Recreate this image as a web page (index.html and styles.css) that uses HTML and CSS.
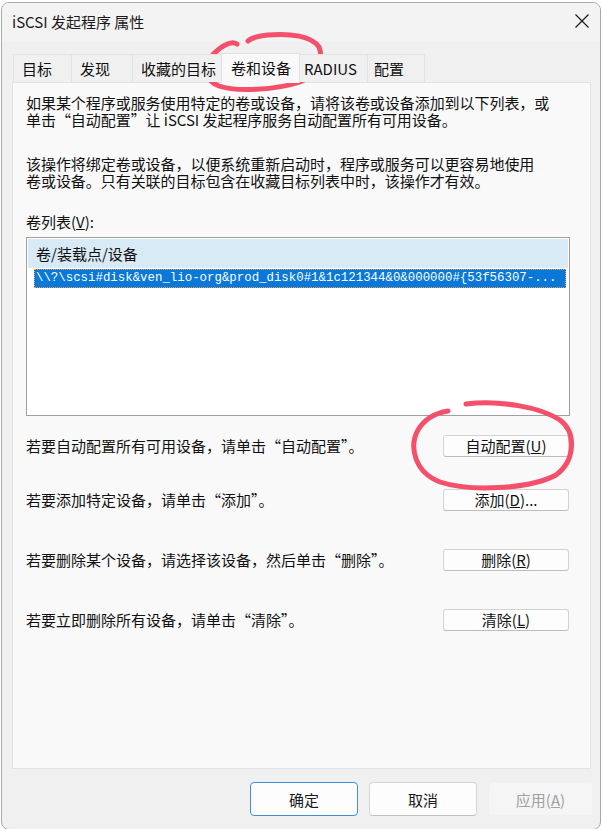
FILE: index.html
```html
<!DOCTYPE html>
<html lang="zh-CN">
<head>
<meta charset="utf-8">
<title>iSCSI 发起程序 属性</title>
<link rel="stylesheet" href="styles.css">
</head>
<body>
<div class="window">
  <div class="titlebar">
    <span class="title">iSCSI 发起程序 属性</span>
    <svg class="close" width="16" height="16" viewBox="0 0 16 16"><path d="M1.5 1.5 L14.5 14.5 M14.5 1.5 L1.5 14.5" stroke="#1a1a1a" stroke-width="1.2" fill="none"/></svg>
  </div>
  <div class="tabs">
    <div class="tab t1">目标</div>
    <div class="tab t2">发现</div>
    <div class="tab t3">收藏的目标</div>
    <div class="tab t4 active">卷和设备</div>
    <div class="tab t5">RADIUS</div>
    <div class="tab t6">配置</div>
  </div>
  <div class="panel">
    <p class="para p1">如果某个程序或服务使用特定的卷或设备，请将该卷或设备添加到以下列表，或<br>单击“自动配置”让 iSCSI 发起程序服务自动配置所有可用设备。</p>
    <p class="para p2">该操作将绑定卷或设备，以便系统重新启动时，程序或服务可以更容易地使用<br>卷或设备。只有关联的目标包含在收藏目标列表中时，该操作才有效。</p>
    <p class="label">卷列表(<u>V</u>):</p>
    <div class="listbox">
      <div class="lhead">卷/装载点/设备</div>
      <div class="litem">\\?\scsi#disk&amp;ven_lio-org&amp;prod_disk0#1&amp;1c121344&amp;0&amp;000000#{53f56307-...</div>
    </div>
    <div class="row r1"><span>若要自动配置所有可用设备，请单击“自动配置”。</span><button class="btn">自动配置(<u>U</u>)</button></div>
    <div class="row r2"><span>若要添加特定设备，请单击“添加”。</span><button class="btn">添加(<u>D</u>)...</button></div>
    <div class="row r3"><span>若要删除某个设备，请选择该设备，然后单击“删除”。</span><button class="btn">删除(<u>R</u>)</button></div>
    <div class="row r4"><span>若要立即删除所有设备，请单击“清除”。</span><button class="btn">清除(<u>L</u>)</button></div>
  </div>
  <div class="footer">
    <button class="fbtn default">确定</button>
    <button class="fbtn">取消</button>
    <button class="fbtn disabled">应用(<u>A</u>)</button>
  </div>
</div>
<svg class="marks" width="603" height="829" viewBox="0 0 603 829">
  <path d="M237,44 C231,40 219,47 211,57 C203,68 206,81 219,86 C236,92 276,90 300,82 C318,75 324,60 319,47 C312,36 290,33 268,35 C258,36 251,38 248,41" fill="none" stroke="#f4506b" stroke-width="5" stroke-linecap="round"/>
  <path d="M466,404 C500,400 540,407 560,420 C576,432 576,460 556,475 C530,489 470,492 440,482 C414,472 409,446 418,430 C425,418 436,413 448,411" fill="none" stroke="#f4506b" stroke-width="5" stroke-linecap="round"/>
</svg>
</body>
</html>
```
FILE: styles.css
```css
html, body {
  margin: 0;
  padding: 0;
}
body {
  width: 603px;
  height: 829px;
  background: #ffffff;
  position: relative;
  overflow: hidden;
  font-family: "Noto Sans CJK SC", "Noto Sans", sans-serif;
  color: #111;
}
.window {
  box-sizing: border-box;
  margin: 2px 0 0 1px;
  width: 600px;
  height: 828px;
  border: 1px solid #a9a9a9;
  border-radius: 8px;
  background: #f0f0f0;
  display: flex;
  flex-direction: column;
  overflow: hidden;
}
.titlebar {
  height: 38px;
  background: #f3f3f3;
  display: flex;
  align-items: center;
  justify-content: space-between;
  padding: 0 10px 0 10px;
  flex: none;
}
.title {
  font-size: 15px;
  color: #1a1a1a;
  margin-top: -2px;
}
.close {
  margin-top: -2px;
}
.tabs {
  display: flex;
  align-items: flex-end;
  height: 29px;
  margin-top: 12px;
  padding-left: 11px;
  flex: none;
  position: relative;
  z-index: 1;
}
.tab {
  box-sizing: border-box;
  height: 28px;
  border: 1px solid #e3e3e3;
  border-bottom: none;
  background: #f0f0f0;
  font-size: 15px;
  line-height: 27px;
  padding-left: 8px;
  color: #111;
  margin-right: -1px;
}
.t1 { width: 59px; }
.t2 { width: 62px; }
.t3 { width: 90px; }
.t4 { width: 79px; }
.t5 { width: 69px; padding-left: 4px; }
.t6 { width: 58px; padding-left: 6px; }
.tab.active {
  height: 30px;
  background: #f9f9f9;
  border-color: #e0e0e0;
  margin-bottom: -1px;
  line-height: 28px;
  padding-left: 9px;
}
.panel {
  box-sizing: border-box;
  margin: 0 9px 0 10px;
  height: 687px;
  background: #f9f9f9;
  border: 1px solid #e2e2e2;
  padding: 11px 0 0 13px;
  flex: none;
  font-size: 15px;
}
.para {
  margin: 0;
  line-height: 17px;
  letter-spacing: -0.05px;
}
.p2 {
  margin-top: 27px;
}
.label {
  margin: 24px 0 0 0;
  line-height: 17px;
}
.listbox {
  box-sizing: border-box;
  width: 544px;
  height: 179px;
  margin-top: 7px;
  border: 1px solid #a0a0a0;
  background: #fff;
  padding: 1px;
}
.lhead {
  height: 29px;
  background: #d9eaf7;
  line-height: 29px;
  padding-left: 8px;
  font-size: 15px;
}
.litem {
  box-sizing: border-box;
  margin: 1px 2px 0 6px;
  height: 19px;
  background: #0a78d8;
  color: #fff;
  border: 1px dotted #e8a050;
  font-family: "Liberation Mono", "DejaVu Sans Mono", monospace;
  font-size: 12.4px;
  line-height: 17px;
  padding-left: 1px;
  white-space: nowrap;
  overflow: hidden;
}
.row {
  display: flex;
  align-items: center;
  justify-content: space-between;
  width: 543px;
  height: 22px;
  line-height: 17px;
}
.r1 { margin-top: 19px; }
.r2 { margin-top: 32px; }
.r3 { margin-top: 38px; }
.r4 { margin-top: 38px; }
.row span { margin-top: -2px; }
.btn {
  box-sizing: border-box;
  width: 126px;
  height: 22px;
  background: #fdfdfd;
  border: 1px solid #d3d3d3;
  border-bottom-color: #bdbdbd;
  border-radius: 3px;
  font-family: "Noto Sans CJK SC", "Noto Sans", sans-serif;
  font-size: 15px;
  line-height: 18px;
  color: #111;
  padding: 0;
}
.footer {
  display: flex;
  justify-content: flex-end;
  gap: 11px;
  padding: 13px 7px 0 0;
  flex: none;
}
.fbtn {
  box-sizing: border-box;
  width: 108px;
  height: 34px;
  background: #fdfdfd;
  border: 1px solid #d6d6d6;
  border-bottom-color: #c2c2c2;
  border-radius: 4px;
  font-family: "Noto Sans CJK SC", "Noto Sans", sans-serif;
  font-size: 15px;
  color: #1a1a1a;
  padding: 0;
}
.fbtn.default {
  border: 1px solid #3d8fe0;
}
.fbtn.disabled {
  width: 105px;
  background: #f5f5f5;
  border-color: #f0f0f0;
  color: #a0a0a0;
}
.marks {
  position: absolute;
  left: 0;
  top: 0;
  pointer-events: none;
}
```
